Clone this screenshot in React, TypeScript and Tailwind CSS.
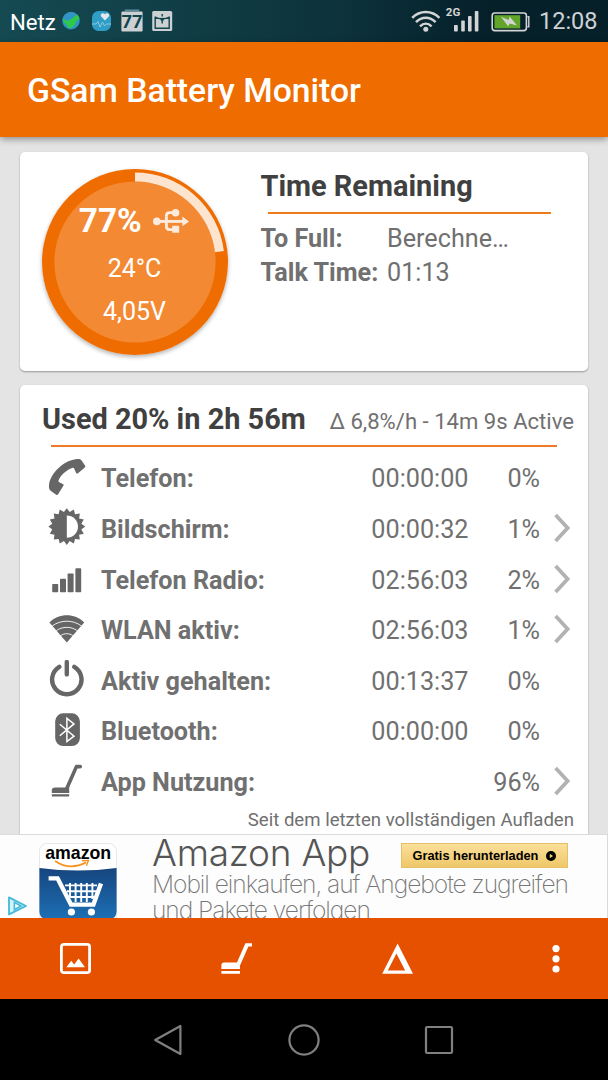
import type { ReactNode } from "react";

const SUN_POINTS = Array.from({ length: 32 }, (_, i) => {
  const r = i % 2 === 0 ? 18.4 : 14.8;
  const a = (i * Math.PI) / 16 - Math.PI / 2;
  return `${(18.8 + r * Math.cos(a)).toFixed(2)},${(18.6 + r * Math.sin(a)).toFixed(2)}`;
}).join(" ");

function RowIcon({ children }: { children: ReactNode }) {
  return (
    <svg viewBox="0 0 38 38" className="h-[38px] w-[38px] shrink-0 fill-[#666666]">
      {children}
    </svg>
  );
}

const PhoneIcon = (
  <RowIcon>
    <path d="M27.5 1.2C30 .6 32.6 1 33.6 2.4L37 7.6C37.5 8.4 37.3 9 36.8 9.5L30 15.2C29.3 15.7 28.5 15.5 28.1 14.9L26.6 11.4C26.3 10.3 25.3 9.6 24.2 9.9C18.5 11.7 12.4 17.4 10.6 22.2C10.2 23.4 10.7 24.1 11.8 24.6L14.8 25.9C15.6 26.3 15.8 27.1 15.4 27.8L10.1 36.2C9.6 37 8.8 37.1 8.1 36.7L2.6 32.7C1 31.4.7 29.4 1 27C2.2 16 14.6 2.9 27.5 1.2Z" />
  </RowIcon>
);

const ScreenIcon = (
  <RowIcon>
    <polygon points={SUN_POINTS} />
    <path d="M18.8 7.4A11.2 11.2 0 0 1 18.8 29.8Z" fill="#fff" />
  </RowIcon>
);

const RadioIcon = (
  <RowIcon>
    <rect x="4.2" y="24.9" width="6" height="8.4" rx=".8" />
    <rect x="12" y="19.7" width="6" height="13.6" rx=".8" />
    <rect x="19.6" y="14.4" width="6" height="18.9" rx=".8" />
    <rect x="27.4" y="9.3" width="5.8" height="24" rx=".8" />
  </RowIcon>
);

const WlanIcon = (
  <RowIcon>
    <path d="M18.8 32.6L1.4 12.4C11 3 26.6 3 36.2 12.4Z" />
    <path
      d="M4.2 16C12.5 9.6 25.1 9.6 33.4 16M8.3 20.7C14.5 16.2 23.1 16.2 29.3 20.7M12.7 25.6C16.4 23.1 21.2 23.1 24.9 25.6"
      fill="none"
      stroke="#fff"
      strokeWidth=".9"
    />
  </RowIcon>
);

const PowerIcon = (
  <RowIcon>
    <path
      d="M11.3 6.9A14.7 14.7 0 1 0 26.3 6.9M18.8 2V14.4"
      fill="none"
      stroke="#666666"
      strokeWidth="4.4"
      strokeLinecap="round"
    />
  </RowIcon>
);

const BluetoothIcon = (
  <RowIcon>
    <rect x="7.2" y="2.3" width="24.7" height="32.8" rx="8" />
    <path
      d="M11.8 13.2L26 25.2L18.9 30.6V7.4L26 12.9L11.8 24.8"
      fill="none"
      stroke="#fff"
      strokeWidth="1.5"
    />
  </RowIcon>
);

const VacuumIcon = (
  <RowIcon>
    <path
      d="M32.3 4.6H28.4L18.9 26.2"
      fill="none"
      stroke="#666666"
      strokeWidth="3.6"
      strokeLinecap="round"
      strokeLinejoin="round"
    />
    <path d="M7 25.4H21.2V31H3.8V28.6C3.8 26.6 5 25.4 7 25.4ZM3.8 32.2H21.2V33.4Q21.2 34.6 20 34.6H5Q3.8 34.6 3.8 33.4Z" />
  </RowIcon>
);

type UsageRow = {
  icon: ReactNode;
  label: string;
  time?: string;
  percent: string;
  more?: boolean;
};

const ROWS: UsageRow[] = [
  { icon: PhoneIcon, label: "Telefon:", time: "00:00:00", percent: "0%" },
  { icon: ScreenIcon, label: "Bildschirm:", time: "00:00:32", percent: "1%", more: true },
  { icon: RadioIcon, label: "Telefon Radio:", time: "02:56:03", percent: "2%", more: true },
  { icon: WlanIcon, label: "WLAN aktiv:", time: "02:56:03", percent: "1%", more: true },
  { icon: PowerIcon, label: "Aktiv gehalten:", time: "00:13:37", percent: "0%" },
  { icon: BluetoothIcon, label: "Bluetooth:", time: "00:00:00", percent: "0%" },
  { icon: VacuumIcon, label: "App Nutzung:", percent: "96%", more: true },
];

function StatusBar() {
  return (
    <div className="flex h-[42px] shrink-0 items-center bg-linear-to-r from-[#154a52] via-[#0d333c] via-55% to-[#06202a] to-80% pr-[11px] pl-[10px] text-[23.5px] leading-none">
      <span className="w-[52px] pt-[2px] text-[22.2px] text-white">Netz</span>
      {/* notification icons */}
      <svg viewBox="0 0 111 24" className="h-6 w-[111px]">
        <circle cx="9" cy="11.6" r="8.8" fill="#3095c4" />
        <path d="M.8 9Q4 13 8 11L15.2 5.5L17.6 9Q17 11 14.5 12L12 17Q9 20 6 18.5L4.5 15Q1 14 .8 9Z" fill="#2fc94a" />
        <rect x="30" y="2" width="19" height="20" rx="6.5" fill="#2f9dc6" />
        <path d="M43 11.5L39.2 7.6C37.6 5.6 40.6 3 43 5.2C45.4 3 48.2 5.6 46.8 7.6Z" fill="#e6e6ea" />
        <path d="M30 15H34L36 12.5L38 18L40.5 13L42.5 17L44.5 15H49" fill="none" stroke="#8cc8dc" strokeWidth="1" />
        <path d="M63.5 2.2V1.2H76.5V2.2" stroke="#5c8da3" fill="none" strokeWidth="1.4" />
        <rect x="59.4" y="2.4" width="21.2" height="20" rx="1" fill="#ccd0d3" />
        <text x="70" y="19.4" textAnchor="middle" className="fill-[#12444c] text-[18.5px] font-bold">
          77
        </text>
        <rect x="90.2" y="2" width="20" height="20" rx="1.5" fill="#ccd0d3" />
        <path
          d="M92.6 7.8Q96 9.8 100.2 9.8Q104.4 9.8 107.8 7.8M93.2 8.2V19.2H107.2V8.2M100.2 5V7.6M100.2 12V14.4"
          fill="none"
          stroke="#12444c"
          strokeWidth="1.4"
        />
        <circle cx="100.2" cy="10.4" r="1.7" fill="#12444c" />
      </svg>
      <span className="grow" />
      <svg viewBox="0 0 120 28" className="mr-[9px] h-7 w-[120px] overflow-visible">
        {/* wifi */}
        <g fill="none" stroke="#d2d4d5" strokeWidth="2.5">
          <path d="M2.2 10.8C9.8 2.9 21.8 2.9 29.4 10.8" />
          <path d="M6 15.2C11.8 9.3 19.8 9.3 25.6 15.2" />
          <path d="M10 19.4C13.6 15.8 18 15.8 21.6 19.4" />
        </g>
        <circle cx="15.8" cy="22.3" r="2.5" fill="#d2d4d5" />
        <text x="35.8" y="8.8" className="fill-[#d2d4d5] text-[11.5px] font-bold">
          2G
        </text>
        <g fill="#d2d4d5">
          <rect x="44" y="18" width="3.8" height="6.6" rx=".8" />
          <rect x="51.2" y="13.6" width="3.6" height="11" rx=".8" />
          <rect x="58" y="9" width="3.6" height="15.6" rx=".8" />
          <rect x="64.8" y="4" width="3.6" height="20.6" rx=".8" />
        </g>
        <rect x="82.2" y="6" width="34.2" height="17.6" rx="2.6" fill="none" stroke="#d2d4d5" strokeWidth="1.6" />
        <path d="M117.4 9.8H118.8V19.8H117.4" fill="none" stroke="#d2d4d5" strokeWidth="1.4" />
        <rect x="84.4" y="8.2" width="25.8" height="13.2" fill="#63a52b" />
        <path d="M91 9.8L98.6 13L99.6 9.4L107 18.6L99.6 16.6L98.2 19.4Z" fill="#d2d4d5" />
      </svg>
      <span className="w-[58px] pt-[2px] text-[#cfd2d4]">12:08</span>
    </div>
  );
}

function BatteryDial() {
  return (
    <div className="relative h-[186px] w-[186px] shrink-0 rounded-full shadow-[0_2px_4px_rgba(0,0,0,0.3)]">
      <svg viewBox="0 0 186 186" className="absolute inset-0 h-full w-full">
        <circle cx="93" cy="93" r="93" fill="#ef6c00" />
        <circle cx="93" cy="93" r="80.6" fill="#f38a33" />
        <path d="M93 3.4A89.6 89.6 0 0 1 181.9 82.1L173 83.2A80.6 80.6 0 0 0 93 12.4Z" fill="#fce4cf" />
      </svg>
      <div className="relative flex flex-col items-center pt-[32.5px] text-[25px] text-white">
        <div className="flex h-10 items-center gap-[11.5px] pr-[2px] text-[33.4px] font-bold">
          <span>77%</span>
          <svg viewBox="0 0 36 26" className="h-[26px] w-9">
            <g fill="none" stroke="#fcebdc" strokeWidth="2.9">
              <path d="M3 13.4H31" />
              <path d="M13.4 13.4V7.8Q13.4 4.6 16.6 4.6H22" />
              <path d="M13.4 13.4V18.6Q13.4 21.6 16.6 21.6H22" />
            </g>
            <g fill="#fcebdc">
              <circle cx="3.8" cy="13.4" r="3.8" />
              <circle cx="22.6" cy="4.8" r="3.8" />
              <rect x="19.2" y="17.8" width="7" height="7" rx=".6" />
              <path d="M29.4 8.6L36 13.4L29.4 18.2Z" />
            </g>
          </svg>
        </div>
        <div className="flex h-14 items-center pr-px">24°C</div>
        <div className="flex h-[30px] items-center pr-px">4,05V</div>
      </div>
    </div>
  );
}

function RemainingCard() {
  return (
    <section className="flex h-[219px] shrink-0 rounded-[5px] bg-white pt-[16.5px] pl-[22px] shadow-[0_1px_2px_rgba(0,0,0,0.35)]">
      <BatteryDial />
      <div className="ml-[32.5px] w-[307px] leading-none">
        <h2 className="flex h-[34px] items-center pt-px text-[28.9px] font-bold text-[#404040]">Time Remaining</h2>
        <div className="mt-[9.5px] ml-[7.5px] h-[2px] w-[283px] bg-[#f07a1a]" />
        <dl className="grid grid-cols-[126.5px_1fr] pt-[7.5px] text-[25.2px] text-[#707070]">
          <dt className="flex h-[34px] items-center font-bold">To Full:</dt>
          <dd className="flex h-[34px] items-center">Berechne…</dd>
          <dt className="flex h-[34px] items-center font-bold whitespace-nowrap">Talk Time:</dt>
          <dd className="flex h-[34px] items-center">01:13</dd>
        </dl>
      </div>
    </section>
  );
}

function UsageCard() {
  return (
    <section className="h-[449px] shrink-0 overflow-hidden rounded-t-[5px] bg-white pr-[14px] pl-[22px] leading-none text-[#707070] shadow-[0_1px_2px_rgba(0,0,0,0.35)]">
      <div className="flex h-[60px] items-baseline justify-between pt-[20px] whitespace-nowrap">
        <h2 className="text-[28.9px] font-bold text-[#404040]">Used 20% in 2h 56m</h2>
        <span className="text-[22.1px]">Δ 6,8%/h - 14m 9s Active</span>
      </div>
      <div className="ml-[9px] h-[2px] w-[506px] bg-[#f07a2a]" />
      <ul className="pt-[6.5px] text-[25.2px]">
        {ROWS.map((row) => (
          <li key={row.label} className="flex h-[50.65px] items-center">
            <span className="mb-[4px] ml-[6px]">{row.icon}</span>
            <span className="ml-[15px] grow font-bold">{row.label}</span>
            <span>{row.time}</span>
            <span className="w-[71.5px] text-right">{row.percent}</span>
            <span className="mb-[3px] w-[34px] pl-[13px]">
              {row.more ? (
                <svg viewBox="0 0 20 32" className="h-8 w-5">
                  <path d="M2.6 3L14.6 16L2.6 29" fill="none" stroke="#b2b2b2" strokeWidth="3.8" />
                </svg>
              ) : null}
            </span>
          </li>
        ))}
      </ul>
      <p className="pt-[3px] text-right text-[18.6px]">Seit dem letzten vollständigen Aufladen</p>
    </section>
  );
}

function AmazonLogo() {
  return (
    <svg viewBox="0 0 78 76" className="h-[76px] w-[78px] shrink-0">
      <defs>
        <linearGradient id="cartBlue" x1="0" y1="0" x2="0" y2="1">
          <stop offset="0" stopColor="#16457e" />
          <stop offset="1" stopColor="#1d6fb4" />
        </linearGradient>
      </defs>
      <rect x=".4" y=".4" width="77.2" height="80" rx="8" fill="#fff" stroke="#dedede" strokeWidth=".8" />
      <path d="M.4 25Q39 30 77.6 25V68Q77.6 76 69.6 76H8.4Q.4 76 .4 68Z" fill="url(#cartBlue)" />
      <text
        x="39.2"
        y="16.4"
        textAnchor="middle"
        textLength="66"
        lengthAdjust="spacingAndGlyphs"
        className="fill-black font-['Liberation_Sans',sans-serif] text-[19px] font-bold"
      >
        amazon
      </text>
      <path d="M16 18Q31 28 47 19.4" fill="none" stroke="#f7931e" strokeWidth="1.8" />
      <path d="M43 17.8L49.4 17.4L47.4 22.8" fill="none" stroke="#f7931e" strokeWidth="1.4" />
      {/* cart */}
      <path d="M9.6 35.4H18.6L32 61.6H54.4L62 40.6" fill="none" stroke="#fff" strokeWidth="4.4" />
      <path
        d="M26 42.4H58M28 48.2H57M31 54H55M31 40V54M36.6 40V59M42.2 40V59M47.8 40V59M53.4 40V56"
        stroke="#fff"
        strokeWidth="1.9"
      />
      <circle cx="32.4" cy="69" r="3.6" fill="#fff" />
      <circle cx="52.4" cy="69" r="3.6" fill="#fff" />
    </svg>
  );
}

function AdBanner() {
  return (
    <div className="flex h-[84px] shrink-0 overflow-hidden border-t border-r border-[#dadada] bg-[#fdfdfd] font-['Inter',sans-serif]">
      <div className="flex w-[39px] items-end pb-[2px] pl-[8px]">
        <svg viewBox="0 0 20 20" className="h-5 w-5">
          <path d="M1 1.4L18 10L1 18.4Z" fill="#d4f1f8" stroke="#42b9d6" strokeWidth="1.8" strokeLinejoin="round" />
          <path d="M6.4 6.4L13 10L6.4 13.6Z" fill="#fff" stroke="#42b9d6" strokeWidth="1.6" />
        </svg>
      </div>
      <div className="pt-[8px]">
        <AmazonLogo />
      </div>
      <div className="ml-[35px] w-[418px] whitespace-nowrap">
        <div className="flex h-[36px] justify-between">
          <span className="text-[37px] leading-[36px] font-light tracking-[-0.25px] text-[#555555]">Amazon App</span>
          <span className="mt-[8px] mr-[2px] flex h-[25px] w-[167px] items-center justify-center gap-[8px] border border-[#e6c069] bg-linear-to-b from-[#fbe09a] to-[#efc768] font-['Liberation_Sans',sans-serif] text-[12.8px] font-bold text-black">
            Gratis herunterladen
            <svg viewBox="0 0 10 10" className="h-[10px] w-[10px]">
              <circle cx="5" cy="5" r="5" />
              <path d="M3.8 2.8L7 5L3.8 7.2Z" fill="#f6d683" />
            </svg>
          </span>
        </div>
        <p className="text-[24.6px] leading-[26px] font-extralight tracking-[-1.05px] text-[#777777]">
          Mobil einkaufen, auf Angebote zugreifen
          <br />
          und Pakete verfolgen
        </p>
      </div>
    </div>
  );
}

function Toolbar() {
  return (
    <div className="flex h-[81px] shrink-0 items-center bg-[#e65100] pl-[60px]">
      <svg viewBox="0 0 32 32" className="h-8 w-8">
        <rect x="1.4" y="1.4" width="28.2" height="28.2" rx="2.4" fill="none" stroke="#fff" strokeWidth="2.8" />
        <path d="M6.4 24.2L11.2 17.8L14.2 21.4L18.6 15.6L25 24.2Z" fill="#fff" />
      </svg>
      <svg viewBox="0 0 32 32" className="ml-[129px] h-8 w-8">
        <path d="M31 .2V3.6H27.4L19 22.6V26H.4V21.6Q.8 19.6 3 19.6H16L24.4 .2ZM.4 28H19V30.8H.4Z" fill="#fff" />
      </svg>
      <svg viewBox="0 0 32 32" className="ml-[129px] h-8 w-8">
        <path d="M15.6 .4L31 30.8H.2ZM14.4 10.4L5.8 27.4H23.2Z" fill="#fff" fillRule="evenodd" />
      </svg>
      <svg viewBox="0 0 8 32" className="ml-[138px] h-8 w-2 fill-white">
        <circle cx="4" cy="5.6" r="3.6" />
        <circle cx="4" cy="15.8" r="3.6" />
        <circle cx="4" cy="26" r="3.6" />
      </svg>
    </div>
  );
}

function NavBar() {
  return (
    <div className="flex h-[81px] shrink-0 items-center justify-center gap-[101px] bg-black">
      <svg viewBox="0 0 34 34" className="h-[34px] w-[34px]" fill="none" stroke="#808080" strokeWidth="2.2" strokeLinejoin="round">
        <path d="M28.4 3V31L3.2 17Z" />
      </svg>
      <svg viewBox="0 0 34 34" className="h-[34px] w-[34px]" fill="none" stroke="#808080" strokeWidth="2.2">
        <circle cx="17" cy="17" r="14.6" />
      </svg>
      <svg viewBox="0 0 34 34" className="h-[34px] w-[34px]" fill="none" stroke="#808080" strokeWidth="2.2">
        <rect x="4" y="4" width="26" height="26" rx="1.2" />
      </svg>
    </div>
  );
}

export default function App() {
  return (
    <div className="flex h-[1080px] w-[608px] flex-col overflow-hidden bg-[#e4e4e4] font-['Roboto',sans-serif]">
      <StatusBar />
      <header className="relative flex h-[94.5px] shrink-0 items-center bg-[#ef6c00] pt-[4px] pl-[27px] shadow-[0_2px_7px_rgba(0,0,0,0.4)]">
        <h1 className="text-[33.7px] leading-none font-medium text-white">GSam Battery Monitor</h1>
      </header>
      <main className="flex h-[697.5px] shrink-0 flex-col gap-[14px] px-5 pt-[15.5px]">
        <RemainingCard />
        <UsageCard />
      </main>
      <AdBanner />
      <Toolbar />
      <NavBar />
    </div>
  );
}
